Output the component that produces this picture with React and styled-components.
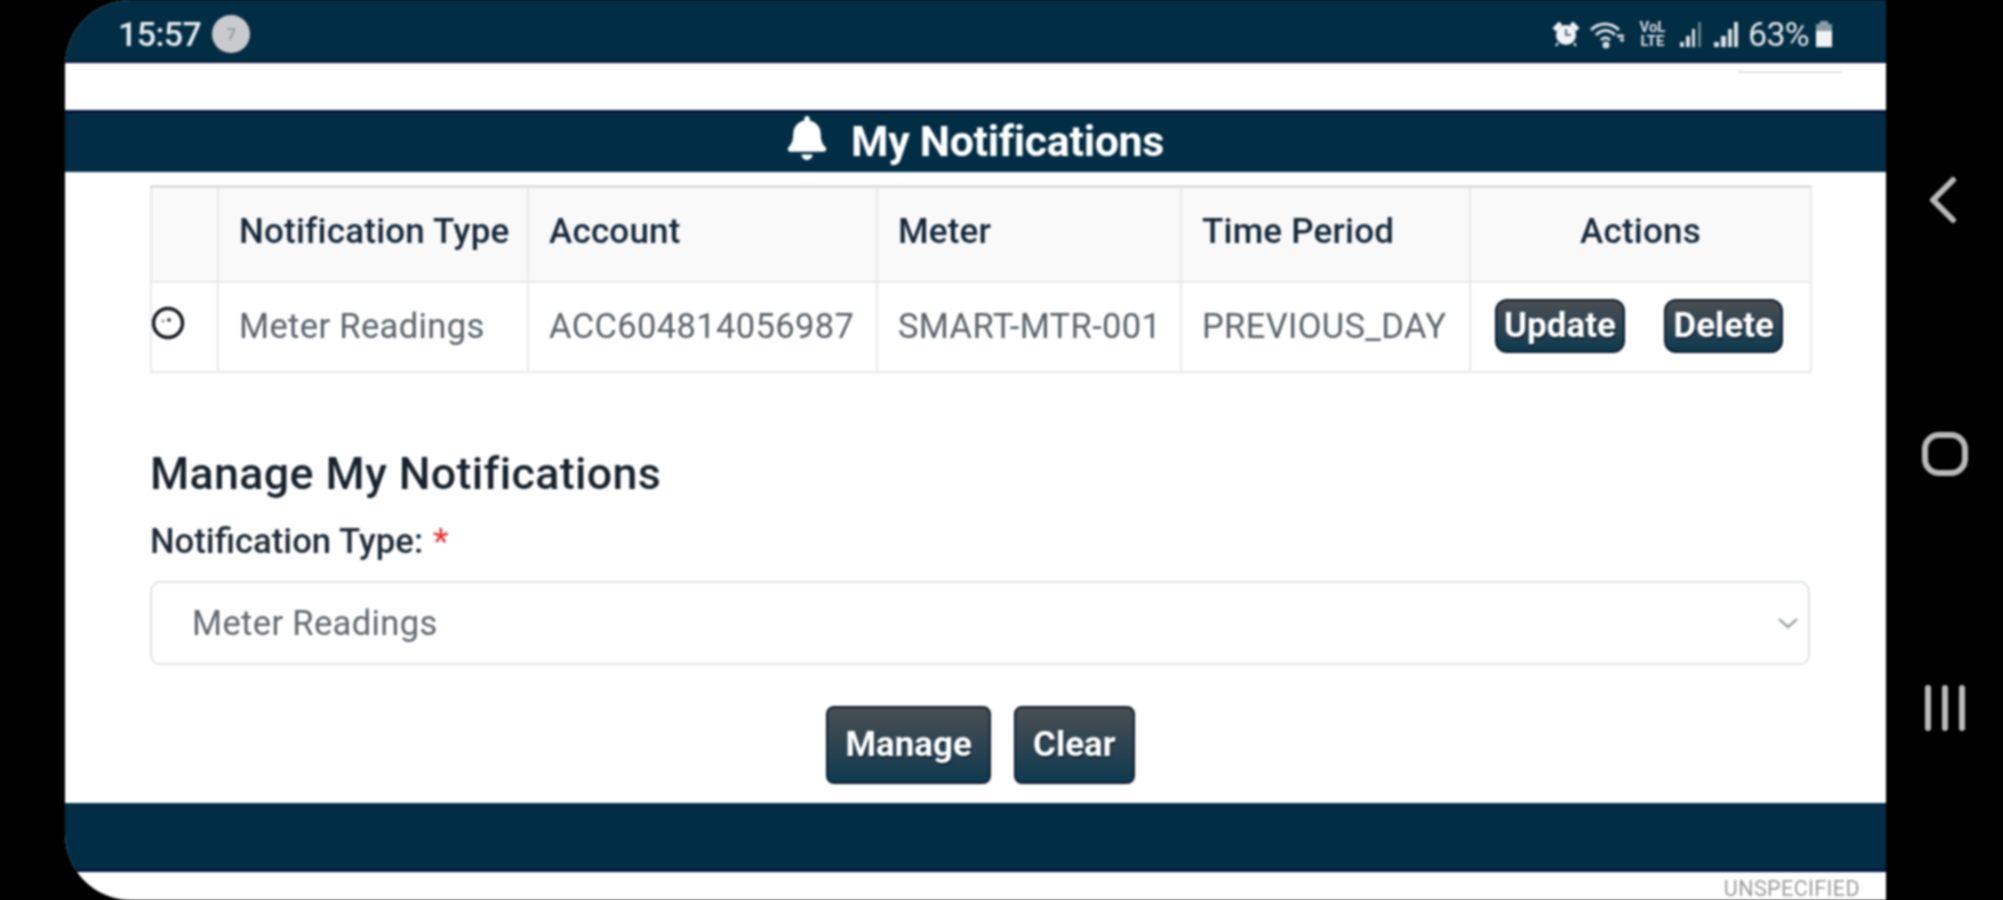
import styled, {createGlobalStyle} from 'styled-components'
import {FaBell} from 'react-icons/fa'

const GlobalStyle = createGlobalStyle`
  html, body {
    margin: 0;
    padding: 0;
    background: #000;
    overflow: hidden;
  }
  * {
    box-sizing: border-box;
  }
`

const Device = styled.div`
  width: 2003px;
  height: 900px;
  display: flex;
  background: #000;
  font-family: Roboto, "Liberation Sans", sans-serif;
  filter: blur(0.9px);
`

const Screen = styled.div`
  margin-left: 65px;
  width: 1821px;
  height: 900px;
  display: flex;
  flex-direction: column;
  background: #fff;
  border-radius: 66px 0 0 66px;
  overflow: hidden;
`

const StatusBar = styled.div`
  height: 63px;
  flex: none;
  display: flex;
  align-items: center;
  justify-content: space-between;
  padding: 6px 52px 0 53px;
  background: #022e45;
  border-bottom: 2px solid #06133c;
  color: #e8ecef;
`

const StatusGroup = styled.div`
  display: flex;
  align-items: center;
  gap: ${props => props.$gap || 11}px;
`

const Clock = styled.span`
  font-size: 34px;
  font-weight: 500;
  letter-spacing: -0.6px;
`

const Badge = styled.span`
  width: 38px;
  height: 38px;
  border-radius: 50%;
  display: flex;
  align-items: center;
  justify-content: center;
  background: #c9cacd;
  color: #9b9ea2;
  font-size: 17px;
  font-weight: 700;
`

const VoLte = styled.span`
  width: 33px;
  font-size: 15px;
  line-height: 14px;
  font-weight: 700;
  text-align: center;
  color: #d5dade;
`

const Percent = styled.span`
  margin-left: -1px;
  margin-right: -5px;
  font-size: 34px;
  letter-spacing: -0.7px;
  color: #e2e6e9;
`

const TopStrip = styled.div`
  height: 47px;
  flex: none;
  display: flex;
  justify-content: flex-end;
  padding: 8px 44px 0 0;
`

const StripRule = styled.div`
  width: 104px;
  height: 2px;
  background: #e4e4e4;
`

const TitleBand = styled.div`
  height: 62px;
  flex: none;
  display: flex;
  align-items: center;
  justify-content: center;
  gap: 24px;
  padding-bottom: 4px;
  background: #022e45;
  border-top: 3px solid #06133c;
  color: #fff;
  font-size: 42.8px;
  font-weight: 700;
  letter-spacing: -0.3px;
`

const TitleBell = styled(FaBell)`
  width: 40px;
  height: 44px;
  margin-top: -5px;
`

const Content = styled.div`
  flex: 1;
  display: flex;
  flex-direction: column;
  padding: 13px 75px 0 85px;
`

const Table = styled.table`
  width: 1660px;
  table-layout: fixed;
  border-collapse: collapse;
  border-top: 3px solid #dedede;
`

const Head = styled.th`
  height: 95px;
  padding: 0 20px 5px;
  background: #f9f9f9;
  border: 2px solid #e8e8e8;
  border-top: 0;
  color: #16293a;
  font-size: 35px;
  font-weight: 500;
  text-align: ${props => props.$align || 'left'};
  letter-spacing: 0.2px;
  white-space: nowrap;
`

const Cell = styled.td`
  height: 90px;
  padding: ${props => props.$flush ? '0 0 8px' : '0 20px 2px'};
  border: 2px solid #e8e8e8;
  color: #5a6268;
  font-size: 34.5px;
  letter-spacing: 0.35px;
  white-space: nowrap;
`

const Actions = styled.div`
  display: flex;
  justify-content: space-between;
  padding: 0 7px 0 4px;
`

const Button = styled.button`
  height: ${props => props.$large ? 78 : 54}px;
  padding: 0 ${props => props.$large ? 17 : 7}px;
  background: linear-gradient(#4b4e52, #0f3a51);
  border: 2px solid #0a1e2e;
  border-radius: ${props => props.$large ? 8 : 12}px;
  color: #fff;
  font-family: inherit;
  font-size: 35px;
  font-weight: 700;
  text-shadow: 1px 2px 1px #10202c;
`

const SectionTitle = styled.h2`
  margin: 76px 0 0;
  font-size: 44.8px;
  line-height: 50px;
  font-weight: 500;
  letter-spacing: 0.35px;
  color: #18232d;
`

const FieldLabel = styled.div`
  margin-top: 20px;
  font-size: 34.7px;
  line-height: 44px;
  font-weight: 500;
  color: #1f2c38;
`

const Required = styled.span`
  margin-left: 10px;
  color: #e53935;
`

const Select = styled.div`
  margin-top: 18px;
  width: 1660px;
  height: 84px;
  flex: none;
  display: flex;
  align-items: center;
  justify-content: space-between;
  padding: 0 7px 0 40px;
  border: 2px solid #dfe1e3;
  border-radius: 10px;
  color: #5f666c;
  font-size: 34.5px;
  letter-spacing: 0.35px;
`

const FormActions = styled.div`
  margin-top: 41px;
  display: flex;
  justify-content: center;
  gap: 23px;
`

const FooterBand = styled.div`
  height: 69px;
  flex: none;
  background: #022e45;
  border-bottom: 3px solid #06133c;
`

const FooterNote = styled.div`
  height: 28px;
  flex: none;
  padding: 8px 26px 0 0;
  text-align: right;
  color: #9c9c9c;
  font-size: 21.5px;
  line-height: 18px;
  letter-spacing: 0.4px;
`

const NavBar = styled.div`
  width: 117px;
  height: 900px;
  display: flex;
  flex-direction: column;
  align-items: center;
  gap: 204px;
  padding-top: 175px;
`

const NavIcon = styled.svg`
  width: 50px;
  height: 50px;
  display: block;
  fill: none;
  stroke: #b9b9b9;
  stroke-width: 6;
  stroke-linecap: round;
  stroke-linejoin: round;
`

const App = () => {
  return (
    <>
      <GlobalStyle />
      <Device>
        <Screen>
          <StatusBar>
            <StatusGroup>
              <Clock>15:57</Clock>
              <Badge>7</Badge>
            </StatusGroup>
            <StatusGroup $gap={10}>
              <svg width="28" height="26" viewBox="0 0 28 26" fill="#f2f4f5">
                <circle cx="14" cy="14" r="10" />
                <path d="M2 7 L7 2 L9 4 L4 9Z M26 7 L21 2 L19 4 L24 9Z M6 22 L4 25 M22 22 L24 25" stroke="#f2f4f5" strokeWidth="2" />
                <path d="M14 8 V14 H19" stroke="#5d7482" strokeWidth="2" fill="none" />
              </svg>
              <svg width="36" height="30" viewBox="0 0 36 30" fill="none" stroke="#d8dde0" strokeWidth="3">
                <path d="M1 11 C9 3 21 3 29 11" />
                <path d="M6 16 C12 10 19 10 25 16" />
                <path d="M11 21 C14 18 17 18 20 21" />
                <circle cx="16" cy="26" r="2" fill="#d8dde0" />
                <path d="M27 17 L34 17 M30 21 L34 21" />
              </svg>
              <VoLte>VoL<br />LTE</VoLte>
              <svg width="24" height="28" viewBox="0 0 24 28" fill="#d8dde0">
                <path d="M1 22 h4 v5 h-4z M7 16 h4 v11 h-4z M13 9 h3 v18 h-3z" />
                <path d="M19 2 h3 v25 h-3z" opacity="0.45" />
              </svg>
              <svg width="26" height="28" viewBox="0 0 26 28" fill="#d8dde0">
                <path d="M1 22 h5 v5 h-5z M8 16 h5 v11 h-5z M15 9 h4 v18 h-4z M21 2 h4 v25 h-4z" />
              </svg>
              <Percent>63%</Percent>
              <svg width="20" height="28" viewBox="0 0 20 28">
                <path d="M6 1 h8 v3 h4 v23 h-16 v-23 h4z" fill="#8b9ba5" />
                <path d="M2 11 h16 v16 h-16z" fill="#f0f2f3" />
              </svg>
            </StatusGroup>
          </StatusBar>
          <TopStrip>
            <StripRule />
          </TopStrip>
          <TitleBand>
            <TitleBell />
            My Notifications
          </TitleBand>
          <Content>
            <Table>
              <colgroup>
                <col width="67" />
                <col width="310" />
                <col width="349" />
                <col width="304" />
                <col width="289" />
                <col width="341" />
              </colgroup>
              <thead>
                <tr>
                  <Head />
                  <Head>Notification Type</Head>
                  <Head>Account</Head>
                  <Head>Meter</Head>
                  <Head>Time Period</Head>
                  <Head $align="center">Actions</Head>
                </tr>
              </thead>
              <tbody>
                <tr>
                  <Cell $flush>
                    <svg width="34" height="34" viewBox="0 0 34 34" fill="none" style={{display: 'block'}}>
                      <circle cx="16" cy="17" r="14.5" stroke="#15181b" strokeWidth="3.5" />
                      <circle cx="11" cy="15" r="1.6" fill="#8a8d90" />
                      <circle cx="17" cy="14" r="2" fill="#44484c" />
                    </svg>
                  </Cell>
                  <Cell>Meter Readings</Cell>
                  <Cell>ACC604814056987</Cell>
                  <Cell>SMART-MTR-001</Cell>
                  <Cell>PREVIOUS_DAY</Cell>
                  <Cell>
                    <Actions>
                      <Button>Update</Button>
                      <Button>Delete</Button>
                    </Actions>
                  </Cell>
                </tr>
              </tbody>
            </Table>
            <SectionTitle>Manage My Notifications</SectionTitle>
            <FieldLabel>
              Notification Type:<Required>*</Required>
            </FieldLabel>
            <Select>
              Meter Readings
              <svg width="26" height="14" viewBox="0 0 26 14" fill="none" stroke="#a0a4a7" strokeWidth="2.5">
                <path d="M4 3 L13 11 L22 3" />
              </svg>
            </Select>
            <FormActions>
              <Button $large>Manage</Button>
              <Button $large>Clear</Button>
            </FormActions>
          </Content>
          <FooterBand />
          <FooterNote>UNSPECIFIED</FooterNote>
        </Screen>
        <NavBar>
          <NavIcon viewBox="0 0 50 50">
            <path d="M33 5 L13 25 L33 45" />
          </NavIcon>
          <NavIcon viewBox="0 0 50 50">
            <rect x="5" y="6" width="40" height="38" rx="14" />
          </NavIcon>
          <NavIcon viewBox="0 0 50 50">
            <path d="M8 5 V45 M25 5 V45 M42 5 V45" />
          </NavIcon>
        </NavBar>
      </Device>
    </>
  )
}

export default App
